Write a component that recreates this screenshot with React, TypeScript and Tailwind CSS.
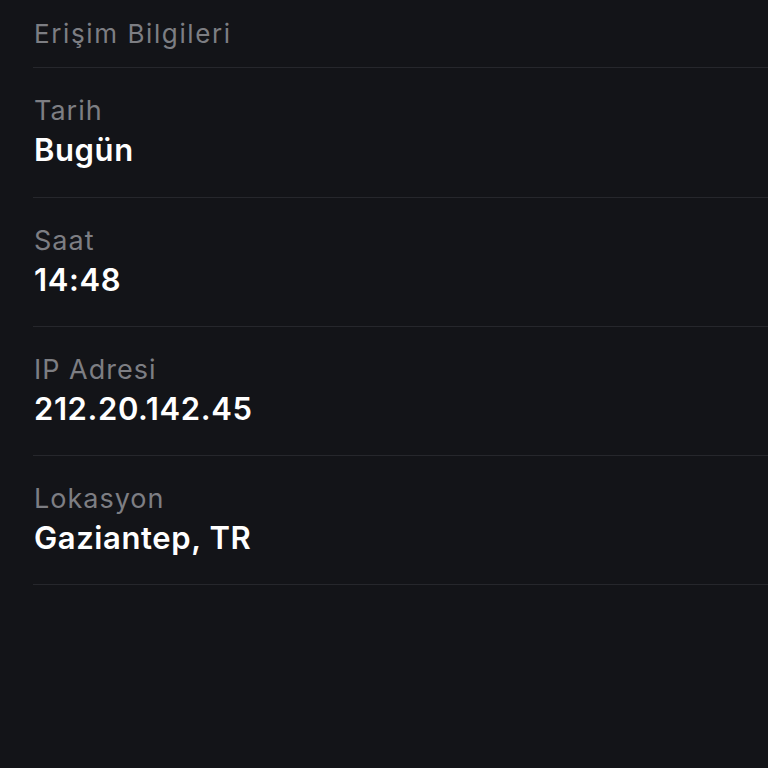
import React from "react";

const rows = [
  { label: "Tarih", value: "Bugün" },
  { label: "Saat", value: "14:48" },
  { label: "IP Adresi", value: "212.20.142.45" },
  { label: "Lokasyon", value: "Gaziantep, TR" },
];

export default function App() {
  return (
    <div
      className="min-h-[768px] w-full bg-[#131418] pl-[33px]"
      style={{ fontFamily: "Inter, 'Noto Sans', sans-serif" }}
    >
      <div className="h-[68px] border-b border-[#26272c] pl-[1px] pt-[17px] text-[26px] leading-[34px] tracking-[1.6px] text-[#7d7e83]">
        Erişim Bilgileri
      </div>
      {rows.map((r, i) => (
        <div
          key={r.label}
          className={
            "flex flex-col border-b border-[#26272c] pl-[1px] pt-[27px] " +
            (i === 0 ? "h-[130px]" : "h-[129px]")
          }
        >
          <div className="text-[27px] leading-[32px] tracking-[1px] text-[#7d7e83]">{r.label}</div>
          <div className="mt-[5px] text-[31px] font-semibold leading-[36px] tracking-[0.6px] text-white">
            {r.value}
          </div>
        </div>
      ))}
    </div>
  );
}
